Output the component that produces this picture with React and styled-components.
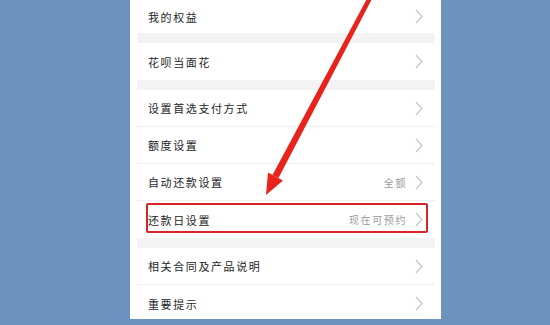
import React from 'react';
import styled, { createGlobalStyle } from 'styled-components';

const GlobalStyle = createGlobalStyle`
  html, body {
    margin: 0;
    padding: 0;
    background: #6e92bf;
  }
  body {
    font-family: "Noto Sans CJK SC", "Noto Sans", sans-serif;
  }
`;

const Page = styled.div`
  position: relative;
  width: 550px;
  height: 325px;
  overflow: hidden;
  background: #6e92bf;
`;

const Panel = styled.div`
  margin-left: 130px;
  width: 311px;
  height: 319px;
  overflow: hidden;
  background: #ffffff;
  padding: 0 6px 0 7px;
  box-sizing: border-box;
`;

const Section = styled.div`
  display: flex;
  flex-direction: column;
  background: #ffffff;
`;

const Gap = styled.div`
  height: 10px;
  background: #f3f3f3;
`;

const Row = styled.div`
  position: relative;
  display: flex;
  align-items: center;
  height: ${({ $h }) => $h || 37}px;
  box-sizing: border-box;
  padding: 0 12px 0 11px;
  border-bottom: ${({ $last }) => ($last ? 'none' : '1px solid #efefef')};
`;

const Label = styled.span`
  flex: 1;
  font-size: 11px;
  letter-spacing: 1.6px;
  color: #1e1e1e;
`;

const Value = styled.span`
  font-size: 10px;
  letter-spacing: 1.6px;
  color: #9a9a9a;
  margin-right: 8px;
`;

const Highlight = styled.div`
  position: absolute;
  top: 2px;
  bottom: 5px;
  left: 9px;
  right: 7px;
  border: 2px solid #d9232b;
  border-radius: 2px;
  pointer-events: none;
`;

const Overlay = styled.svg`
  position: absolute;
  left: 0;
  top: 0;
  pointer-events: none;
`;

function Chevron() {
  return (
    <svg width="8" height="15" viewBox="0 0 8 15">
      <polyline points="1,1 7,7.5 1,14" fill="none" stroke="#c6c6c6" strokeWidth="1.2" />
    </svg>
  );
}

function Item({ label, value, h, last, marked }) {
  return (
    <Row $h={h} $last={last}>
      <Label>{label}</Label>
      {value && <Value>{value}</Value>}
      <Chevron />
      {marked && <Highlight />}
    </Row>
  );
}

export default function App() {
  return (
    <Page>
      <GlobalStyle />
      <Panel>
        <Section>
          <Item label="我的权益" h={33} last />
        </Section>
        <Gap />
        <Section>
          <Item label="花呗当面花" last />
        </Section>
        <Gap />
        <Section>
          <Item label="设置首选支付方式" />
          <Item label="额度设置" />
          <Item label="自动还款设置" value="全额" />
          <Item label="还款日设置" value="现在可预约" last marked />
        </Section>
        <Gap />
        <Section>
          <Item label="相关合同及产品说明" />
          <Item label="重要提示" last />
        </Section>
      </Panel>
      <Overlay width="550" height="325" viewBox="0 0 550 325">
        <polygon
          points="373.5,-4 369.5,-6 272.5,175 278.5,178"
          fill="#e8231b"
        />
        <polygon points="266,195 283,180.5 268,172.5" fill="#e8231b" />
      </Overlay>
    </Page>
  );
}
